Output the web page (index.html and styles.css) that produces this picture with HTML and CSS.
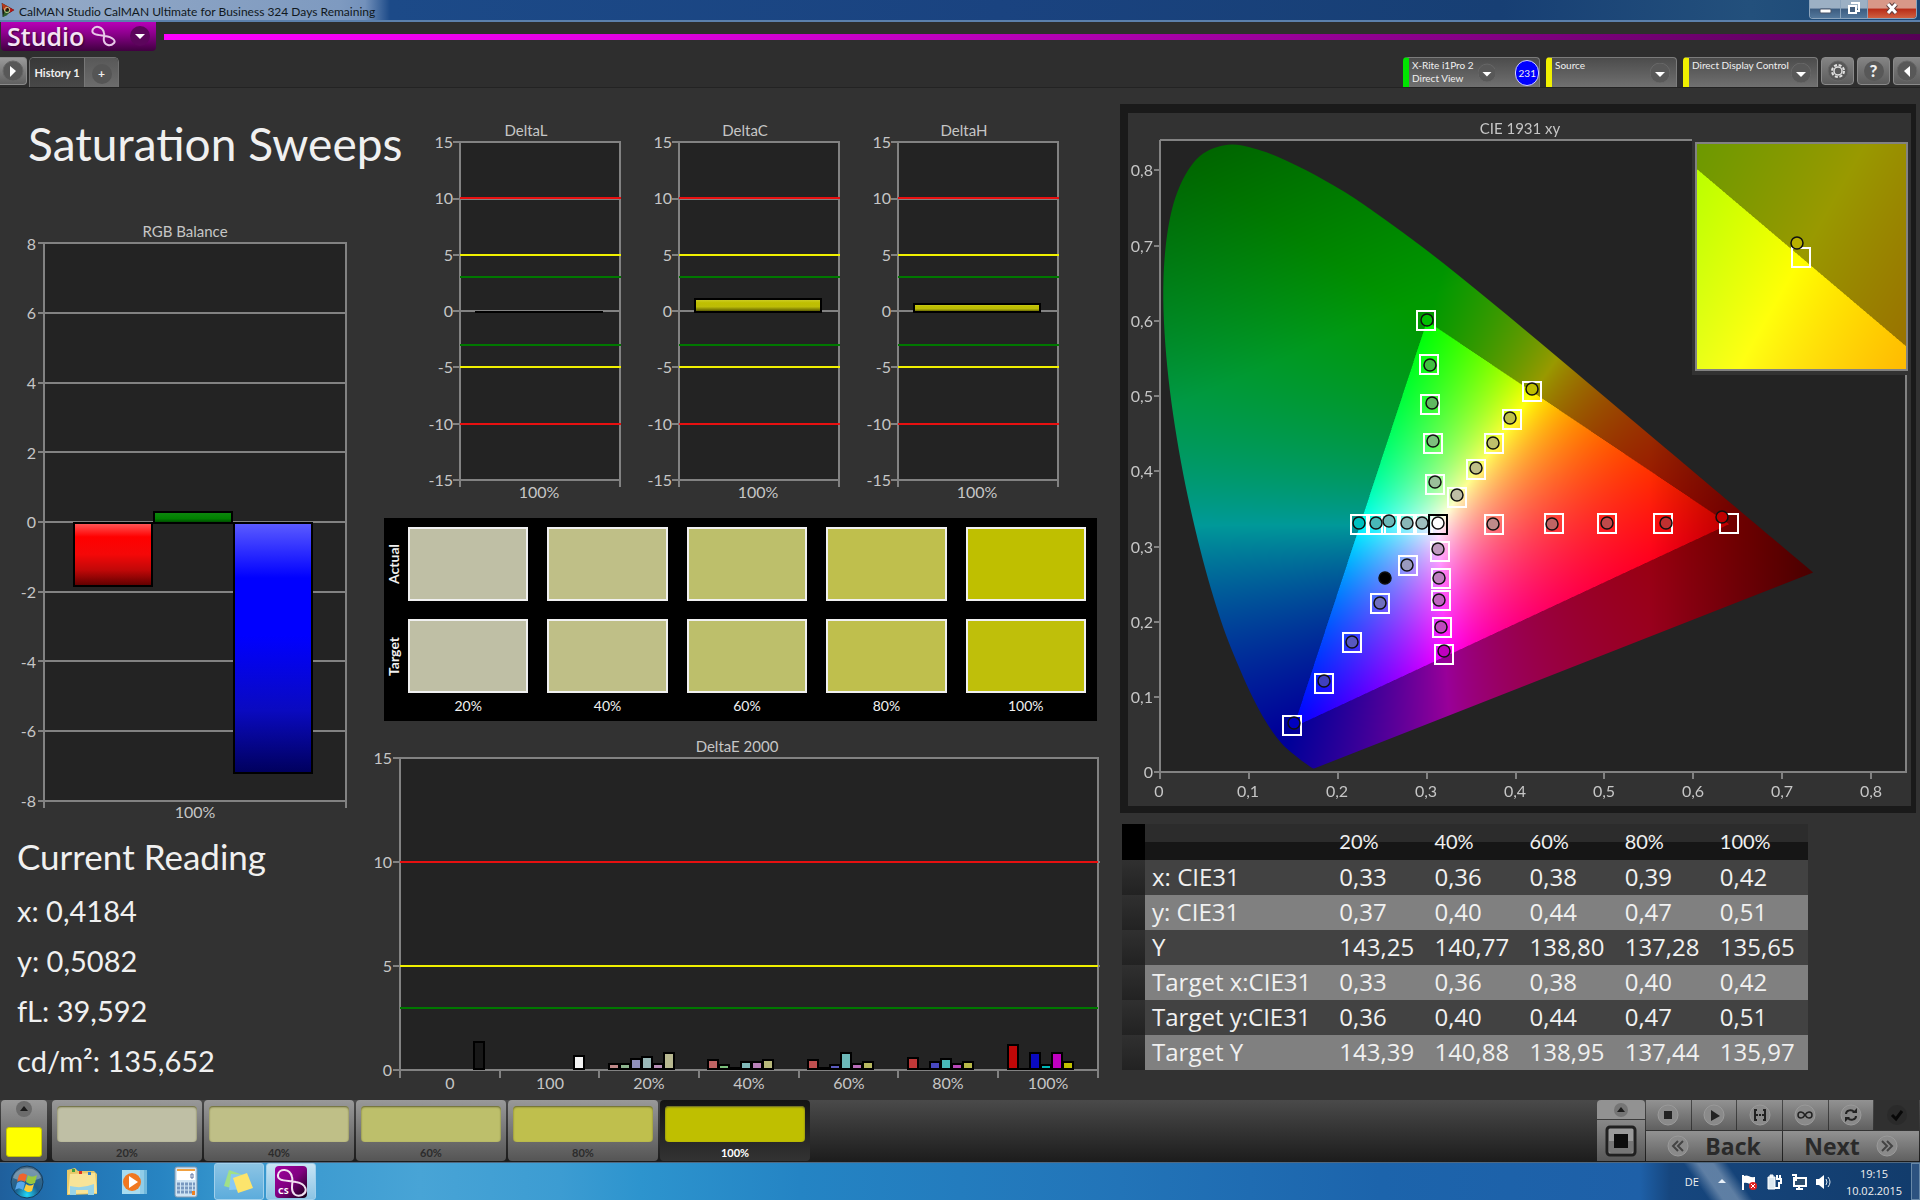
FILE: index.html
```html
<!DOCTYPE html>
<html lang="en">
<head>
<meta charset="utf-8">
<title>CalMAN Studio CalMAN Ultimate for Business 324 Days Remaining</title>
<link rel="stylesheet" href="styles.css">
</head>
<body>
<header class="titlebar">
  <svg class="app-icon" viewBox="0 0 16 18" aria-hidden="true">
    <path d="M1 1l14 8L2 17z" fill="#1c1c10"/><path d="M1 1l7 4-3 5-3-2z" fill="#b53a1c"/><path d="M8 5l7 4-5 3z" fill="#b01818"/><path d="M4 11l6-2-3 6-5 2z" fill="#2c5c2c"/><circle cx="7" cy="9" r="3" fill="none" stroke="#c8d090"/>
  </svg>
  <h1 class="window-title">CalMAN Studio CalMAN Ultimate for Business 324 Days Remaining</h1>
  <div class="window-buttons">
    <button class="win-btn" aria-label="Minimize"><svg viewBox="0 0 30 18" width="30" height="18"><rect x="10" y="9" width="11" height="4" rx="1" fill="#fff" stroke="#4a5468"/></svg></button>
    <button class="win-btn restore" aria-label="Restore"><svg viewBox="0 0 26 18" width="26" height="18"><path d="M10 3h8v8h-2" fill="none" stroke="#fff" stroke-width="2"/><rect x="8" y="6" width="7" height="7" fill="#46607e" stroke="#fff" stroke-width="2"/></svg></button>
    <button class="win-btn close" aria-label="Close"><svg viewBox="0 0 48 18" width="48" height="18"><path d="M20 4l8 9M28 4l-8 9" stroke="#604040" stroke-width="5"/><path d="M20 4l8 9M28 4l-8 9" stroke="#fff" stroke-width="3"/></svg></button>
  </div>
</header>

<div class="brand-row">
  <button class="brand">
    <span>Studio</span>
    <svg viewBox="0 0 26 22" width="26" height="22" aria-hidden="true"><path d="M14 8C13 2 6 0 3 4C0 10 9 10 15 11C23 12 26 16 24 18C20 22 15 20 14 16C13 13 15 11 14 8" fill="none" stroke="#e8c8e8" stroke-width="2"/></svg>
    <svg class="drop" viewBox="0 0 20 20" width="20" height="20" aria-hidden="true"><circle cx="10" cy="10" r="10" fill="#5c055c"/><path d="M5 8h10l-5 5z" fill="#fff"/></svg>
  </button>
  <div class="brand-line"></div>
</div>

<nav class="tab-row">
  <button class="square-btn left" aria-label="Show panel"><svg viewBox="0 0 22 22" width="22" height="22"><circle class="knob" cx="11" cy="11" r="10"/><path d="M8 6v11l6-6z" fill="#fff"/></svg></button>
  <div class="tabs">
    <button class="tab current">History 1</button>
    <button class="tab add" aria-label="Add tab"><span>+</span></button>
  </div>
  <div class="devices">
    <button class="device meter"><span class="device-name">X-Rite i1Pro 2<br>Direct View</span><svg viewBox="0 0 20 20" width="20" height="20"><circle class="knob" cx="10" cy="10" r="10"/><path d="M5 9h10l-5 5z" fill="#fff"/></svg><span class="count">231</span></button>
    <button class="device source"><span class="device-name">Source</span><svg viewBox="0 0 20 20" width="20" height="20"><circle class="knob" cx="10" cy="10" r="10"/><path d="M5 9h10l-5 5z" fill="#fff"/></svg></button>
    <button class="device display"><span class="device-name">Direct Display Control</span><svg viewBox="0 0 20 20" width="20" height="20"><circle class="knob" cx="10" cy="10" r="10"/><path d="M5 9h10l-5 5z" fill="#fff"/></svg></button>
    <button class="square-btn" aria-label="Settings"><svg viewBox="0 0 22 22" width="22" height="22"><circle class="knob" cx="11" cy="11" r="10"/><circle cx="11" cy="11" r="6" fill="none" stroke="#e0e0e0" stroke-width="2" stroke-dasharray="3 1.7"/><circle cx="11" cy="11" r="4" fill="none" stroke="#e0e0e0" stroke-width="1.5"/></svg></button>
    <button class="square-btn" aria-label="Help"><span class="help">?</span></button>
    <button class="square-btn right" aria-label="Hide panel"><svg viewBox="0 0 22 22" width="22" height="22"><circle class="knob" cx="11" cy="11" r="10"/><path d="M14 6v11l-6-6z" fill="#fff"/></svg></button>
  </div>
</nav>

<main class="workspace">
  <section class="col-left">
    <h2 class="page-title">Saturation Sweeps</h2>
    <svg class="chart" viewBox="0 0 370 606" role="img" aria-label="RGB Balance">
      <defs>
        <linearGradient id="red" x1="0" y1="0" x2="0" y2="1"><stop offset="0" stop-color="#ff5a5a"/><stop offset=".22" stop-color="#f00"/><stop offset=".5" stop-color="#f40808"/><stop offset=".75" stop-color="#c00808"/><stop offset="1" stop-color="#5c0000"/></linearGradient>
        <linearGradient id="blue" x1="0" y1="0" x2="0" y2="1"><stop offset="0" stop-color="#5c5cff"/><stop offset=".22" stop-color="#00f"/><stop offset=".45" stop-color="#00f"/><stop offset=".75" stop-color="#0a0ac0"/><stop offset="1" stop-color="#00005c"/></linearGradient>
        <linearGradient id="green" x1="0" y1="0" x2="0" y2="1"><stop offset="0" stop-color="#108810"/><stop offset=".6" stop-color="#008000"/><stop offset="1" stop-color="#004000"/></linearGradient>
        <linearGradient id="yellow" x1="0" y1="0" x2="0" y2="1"><stop offset="0" stop-color="#d0d030"/><stop offset=".3" stop-color="#bfbf00"/><stop offset=".6" stop-color="#bcbc08"/><stop offset="1" stop-color="#484800"/></linearGradient>
      </defs>
      <text class="mid name" x="185" y="17">RGB Balance</text>
      <rect class="plot" x="44" y="23" width="302" height="558"/>
      <path class="grid" d="M38 23h6M38 93h308M38 163h308M38 232h308M38 302h308M38 372h308M38 441h308M38 511h308M38 581h6M44 581v7M346 581v7"/>
      <g class="end"><text x="36" y="30">8</text><text x="36" y="99">6</text><text x="36" y="169">4</text><text x="36" y="239">2</text><text x="36" y="308">0</text><text x="36" y="378">-2</text><text x="36" y="448">-4</text><text x="36" y="517">-6</text><text x="36" y="587">-8</text></g>
      <g stroke="#000" stroke-width="2"><rect x="74" y="303" width="78" height="63" fill="url(#red)"/><rect x="154" y="292" width="78" height="11" fill="url(#green)"/><rect x="234" y="303" width="78" height="250" fill="url(#blue)"/></g>
      <text class="mid" x="195" y="598">100%</text>
    </svg>
    <div class="reading">
      <h3>Current Reading</h3>
      <p>x: 0,4184</p>
      <p>y: 0,5082</p>
      <p>fL: 39,592</p>
      <p>cd/m²: 135,652</p>
    </div>
  </section>

  <section class="col-mid">
    <div class="deltas">
      <svg class="chart" viewBox="0 0 219 400" role="img" aria-label="DeltaL">
        <text class="mid name" x="106" y="26">DeltaL</text>
        <rect class="plot" x="40" y="32" width="160" height="338"/>
        <path class="grid" d="M33 32h7M33 89h167M33 145h167M33 201h167M33 257h167M33 314h167M33 370h7M40 370v7M200 370v7"/>
        <path class="limit-red" d="M40 88h161M40 314h161"/><path class="limit-yellow" d="M40 145h161M40 257h161"/><path class="limit-green" d="M40 167h161M40 235h161"/>
        <path d="M55 202h128" stroke="#000" stroke-width="2"/>
        <g class="end"><text x="33" y="38">15</text><text x="33" y="94">10</text><text x="33" y="151">5</text><text x="33" y="207">0</text><text x="33" y="263">-5</text><text x="33" y="320">-10</text><text x="33" y="376">-15</text></g>
        <text class="mid" x="119" y="388">100%</text>
      </svg>
      <svg class="chart" viewBox="0 0 219 400" role="img" aria-label="DeltaC">
        <text class="mid name" x="106" y="26">DeltaC</text>
        <rect class="plot" x="40" y="32" width="160" height="338"/>
        <path class="grid" d="M33 32h7M33 89h167M33 145h167M33 201h167M33 257h167M33 314h167M33 370h7M40 370v7M200 370v7"/>
        <path class="limit-red" d="M40 88h161M40 314h161"/><path class="limit-yellow" d="M40 145h161M40 257h161"/><path class="limit-green" d="M40 167h161M40 235h161"/>
        <rect x="56" y="189" width="126" height="13" fill="url(#yellow)" stroke="#000" stroke-width="2"/>
        <g class="end"><text x="33" y="38">15</text><text x="33" y="94">10</text><text x="33" y="151">5</text><text x="33" y="207">0</text><text x="33" y="263">-5</text><text x="33" y="320">-10</text><text x="33" y="376">-15</text></g>
        <text class="mid" x="119" y="388">100%</text>
      </svg>
      <svg class="chart" viewBox="0 0 219 400" role="img" aria-label="DeltaH">
        <text class="mid name" x="106" y="26">DeltaH</text>
        <rect class="plot" x="40" y="32" width="160" height="338"/>
        <path class="grid" d="M33 32h7M33 89h167M33 145h167M33 201h167M33 257h167M33 314h167M33 370h7M40 370v7M200 370v7"/>
        <path class="limit-red" d="M40 88h161M40 314h161"/><path class="limit-yellow" d="M40 145h161M40 257h161"/><path class="limit-green" d="M40 167h161M40 235h161"/>
        <rect x="56" y="194" width="126" height="8" fill="url(#yellow)" stroke="#000" stroke-width="2"/>
        <g class="end"><text x="33" y="38">15</text><text x="33" y="94">10</text><text x="33" y="151">5</text><text x="33" y="207">0</text><text x="33" y="263">-5</text><text x="33" y="320">-10</text><text x="33" y="376">-15</text></g>
        <text class="mid" x="119" y="388">100%</text>
      </svg>
    </div>

    <div class="compare">
      <span class="side">Actual</span><i class="chip y20"></i><i class="chip y40"></i><i class="chip y60"></i><i class="chip y80"></i><i class="chip y100"></i>
      <span class="side">Target</span><i class="chip y20"></i><i class="chip y40"></i><i class="chip y60"></i><i class="chip y80"></i><i class="chip t100"></i>
      <span></span><span class="pct">20%</span><span class="pct">40%</span><span class="pct">60%</span><span class="pct">80%</span><span class="pct">100%</span>
    </div>

    <svg class="chart" viewBox="0 0 740 370" role="img" aria-label="DeltaE 2000">
      <text class="mid name" x="367" y="22">DeltaE 2000</text>
      <rect class="plot" x="30" y="28" width="698" height="312"/>
      <path class="grid" d="M23 28h7M23 132h707M23 236h707M23 340h7M30 340v8M130 340v8M229 340v8M329 340v8M429 340v8M528 340v8M628 340v8M728 340v8"/>
      <path class="limit-red" d="M30 132h698"/><path class="limit-yellow" d="M30 236h698"/><path class="limit-green" d="M30 278h698"/>
      <g class="end"><text x="22" y="34">15</text><text x="22" y="138">10</text><text x="22" y="242">5</text><text x="22" y="346">0</text></g>
      <g class="bars">
        <path fill="#181818" d="M104 312h10v27h-10z"/><path fill="#f4f4f4" d="M204 326h10v13h-10z"/>
        <path fill="#c08a8a" d="M239 334h10v5h-10z"/><path fill="#8fb58f" d="M250 334h10v5h-10z"/><path fill="#9090bc" d="M261 329h10v10h-10z"/><path fill="#9ab8b8" d="M272 327h10v12h-10z"/><path fill="#b890b8" d="M283 334h10v5h-10z"/><path fill="#b8b890" d="M294 323h10v16h-10z"/>
        <path fill="#c06464" d="M338 330h10v9h-10z"/><path fill="#7dc07d" d="M349 335h10v4h-10z"/><path fill="#000" d="M360 338h10v1h-10z"/><path fill="#80b8b8" d="M371 332h10v7h-10z"/><path fill="#b880b8" d="M382 332h10v7h-10z"/><path fill="#b8b87a" d="M393 330h10v9h-10z"/>
        <path fill="#c05050" d="M438 330h10v9h-10z"/><path fill="#000" d="M449 338h10v1h-10z"/><path fill="#5c5cc0" d="M460 335h10v4h-10z"/><path fill="#6cb8b8" d="M471 323h10v16h-10z"/><path fill="#b86cb8" d="M482 334h10v5h-10z"/><path fill="#b8b860" d="M493 332h10v7h-10z"/>
        <path fill="#c03838" d="M538 328h10v11h-10z"/><path fill="#000" d="M549 339h10v0h-10z"/><path fill="#4848c0" d="M560 332h10v7h-10z"/><path fill="#48b8b8" d="M571 329h10v10h-10z"/><path fill="#b848b8" d="M582 334h10v5h-10z"/><path fill="#b8b848" d="M593 332h10v7h-10z"/>
        <path fill="#c00808" d="M638 315h10v24h-10z"/><path fill="#000" d="M649 339h10v0h-10z"/><path fill="#0a0ac0" d="M660 323h10v16h-10z"/><path fill="#00b8b8" d="M671 335h10v4h-10z"/><path fill="#c000c0" d="M682 323h10v16h-10z"/><path fill="#c0c000" d="M693 332h10v7h-10z"/>
      </g>
      <g class="mid"><text x="80" y="359">0</text><text x="180" y="359">100</text><text x="279" y="359">20%</text><text x="379" y="359">40%</text><text x="479" y="359">60%</text><text x="578" y="359">80%</text><text x="678" y="359">100%</text></g>
    </svg>
  </section>

  <section class="col-right">
    <div class="cie">
      <canvas id="cie" width="1566" height="1386"></canvas>
      <svg class="chart" viewBox="0 0 783 693" role="img" aria-label="CIE 1931 xy">
        <defs><rect id="t" x="-9" y="-9" width="18" height="19" fill="none" stroke-width="2"/></defs>
        <text class="mid name" x="392" y="21">CIE 1931 xy</text>
        <path class="grid" d="M32 27H564M32 27V659H778V262M26 57h6M26 133h6M26 208h6M26 283h6M26 358h6M26 434h6M26 509h6M26 584h6M26 659h6M32 659v7M121 659v7M210 659v7M299 659v7M388 659v7M476 659v7M565 659v7M654 659v7M743 659v7"/>
        <rect class="grid" x="568" y="30" width="211" height="227"/>
        <g class="end"><text x="25" y="63">0,8</text><text x="25" y="139">0,7</text><text x="25" y="214">0,6</text><text x="25" y="289">0,5</text><text x="25" y="364">0,4</text><text x="25" y="440">0,3</text><text x="25" y="515">0,2</text><text x="25" y="590">0,1</text><text x="25" y="665">0</text></g>
        <g class="mid"><text x="31" y="684">0</text><text x="120" y="684">0,1</text><text x="209" y="684">0,2</text><text x="298" y="684">0,3</text><text x="387" y="684">0,4</text><text x="476" y="684">0,5</text><text x="565" y="684">0,6</text><text x="654" y="684">0,7</text><text x="743" y="684">0,8</text></g>
        <g stroke="#fff">
          <use href="#t" x="298" y="207"/><use href="#t" x="301" y="251"/><use href="#t" x="302" y="291"/><use href="#t" x="305" y="330"/><use href="#t" x="307" y="371"/>
          <use href="#t" x="404" y="278"/><use href="#t" x="384" y="306"/><use href="#t" x="366" y="330"/><use href="#t" x="348" y="356"/><use href="#t" x="329" y="384"/>
          <use href="#t" x="366" y="411"/><use href="#t" x="426" y="410"/><use href="#t" x="479" y="410"/><use href="#t" x="535" y="410"/><use href="#t" x="601" y="410"/>
          <use href="#t" x="232" y="411"/><use href="#t" x="248" y="411"/><use href="#t" x="263" y="411"/><use href="#t" x="279" y="411"/><use href="#t" x="295" y="411"/>
          <use href="#t" x="312" y="438"/><use href="#t" x="313" y="465"/><use href="#t" x="313" y="487"/><use href="#t" x="314" y="514"/><use href="#t" x="316" y="541"/>
          <use href="#t" x="280" y="452"/><use href="#t" x="252" y="490"/><use href="#t" x="224" y="529"/><use href="#t" x="196" y="570"/><use href="#t" x="164" y="612"/>
          <use href="#t" x="673" y="144"/>
        </g>
        <use href="#t" x="310" y="411" stroke="#000"/>
        <g stroke="#101010" stroke-width="1.5">
          <circle cx="299" cy="207" r="6" fill="#00bf00"/><circle cx="302" cy="252" r="6" fill="#40bf40"/><circle cx="304" cy="290" r="6" fill="#60b860"/><circle cx="305" cy="328" r="6" fill="#7dbf7d"/><circle cx="307" cy="369" r="6" fill="#9abf9a"/>
          <circle cx="404" cy="276" r="6" fill="#bfbf00"/><circle cx="382" cy="305" r="6" fill="#bfbf48"/><circle cx="365" cy="330" r="6" fill="#bfbf6b"/><circle cx="348" cy="355" r="6" fill="#bfbf87"/><circle cx="329" cy="382" r="6" fill="#bfbfa5"/>
          <circle cx="365" cy="411" r="6" fill="#bf8a8a"/><circle cx="424" cy="411" r="6" fill="#bf6464"/><circle cx="479" cy="410" r="6" fill="#bf4a4a"/><circle cx="538" cy="410" r="6" fill="#bf3030"/><circle cx="594" cy="404" r="6" fill="#bf0000"/>
          <circle cx="231" cy="410" r="6" fill="#00bfbf"/><circle cx="248" cy="410" r="6" fill="#48b8b8"/><circle cx="261" cy="408" r="6" fill="#6cb8b8"/><circle cx="279" cy="410" r="6" fill="#8ab8b8"/><circle cx="294" cy="410" r="6" fill="#a0bfbf"/>
          <circle cx="310" cy="410" r="6" fill="#fff"/>
          <circle cx="310" cy="436" r="6" fill="#bf9abf"/><circle cx="311" cy="465" r="6" fill="#bf7dbf"/><circle cx="311" cy="487" r="6" fill="#bf64bf"/><circle cx="313" cy="514" r="6" fill="#bf48bf"/><circle cx="316" cy="538" r="6" fill="#bf00bf"/>
          <circle cx="279" cy="452" r="6" fill="#9a9abf"/><circle cx="252" cy="490" r="6" fill="#7070bf"/><circle cx="224" cy="529" r="6" fill="#5858bf"/><circle cx="196" cy="568" r="6" fill="#4040bf"/><circle cx="166" cy="610" r="6" fill="#0000bf"/>
          <circle cx="257" cy="465" r="6" fill="#000"/><circle cx="669" cy="130" r="6" fill="#b8b000"/>
        </g>
      </svg>
    </div>
    <table class="readings">
      <thead><tr><th class="mark"></th><th></th><th>20%</th><th>40%</th><th>60%</th><th>80%</th><th>100%</th></tr></thead>
      <tbody>
        <tr><td class="mark"></td><th>x: CIE31</th><td>0,33</td><td>0,36</td><td>0,38</td><td>0,39</td><td>0,42</td></tr>
        <tr><td class="mark"></td><th>y: CIE31</th><td>0,37</td><td>0,40</td><td>0,44</td><td>0,47</td><td>0,51</td></tr>
        <tr><td class="mark"></td><th>Y</th><td>143,25</td><td>140,77</td><td>138,80</td><td>137,28</td><td>135,65</td></tr>
        <tr><td class="mark"></td><th>Target x:CIE31</th><td>0,33</td><td>0,36</td><td>0,38</td><td>0,40</td><td>0,42</td></tr>
        <tr><td class="mark"></td><th>Target y:CIE31</th><td>0,36</td><td>0,40</td><td>0,44</td><td>0,47</td><td>0,51</td></tr>
        <tr><td class="mark"></td><th>Target Y</th><td>143,39</td><td>140,88</td><td>138,95</td><td>137,44</td><td>135,97</td></tr>
      </tbody>
    </table>
  </section>
</main>

<footer class="player">
  <button class="pattern-source" aria-label="Pattern window"><svg viewBox="0 0 16 16" width="16" height="16"><circle cx="8" cy="8" r="8" fill="#6c6c6c"/><path d="M4 10h8L8 5z" fill="#1c1c1c"/></svg><i class="current-color"></i></button>
  <div class="patterns">
    <button class="pattern"><i class="y20"></i>20%</button>
    <button class="pattern"><i class="y40"></i>40%</button>
    <button class="pattern"><i class="y60"></i>60%</button>
    <button class="pattern"><i class="y80"></i>80%</button>
    <button class="pattern active"><i class="y100"></i>100%</button>
  </div>
  <div class="controls">
    <div class="stack">
      <button class="ctl up" aria-label="Expand"><svg viewBox="0 0 16 16" width="16" height="16"><circle cx="8" cy="8" r="7" fill="#757575"/><path d="M4 10h8L8 5z" fill="#1c1c1c"/></svg></button>
      <button class="ctl pick" aria-label="Pattern size"><svg viewBox="0 0 32 32" width="32" height="32"><rect x="2" y="2" width="28" height="28" rx="3" fill="#9a9a9a" stroke="#202020" stroke-width="3"/><path d="M4 16h24v10a2 2 0 0 1-2 2H6a2 2 0 0 1-2-2z" fill="#767676"/><rect x="9" y="9" width="14" height="14" fill="#0c0c0c"/></svg></button>
    </div>
    <div class="transport">
      <button class="ctl" aria-label="Stop"><svg viewBox="0 0 22 22" width="22" height="22"><circle class="disc" cx="11" cy="11" r="10"/><rect x="7" y="7" width="8" height="8" fill="#222"/></svg></button>
      <button class="ctl" aria-label="Play"><svg viewBox="0 0 22 22" width="22" height="22"><circle class="disc" cx="11" cy="11" r="10"/><path d="M8 6v11l9-5z" fill="#222"/></svg></button>
      <button class="ctl" aria-label="Read series"><svg viewBox="0 0 22 22" width="22" height="22"><circle class="disc" cx="11" cy="11" r="10"/><path d="M8 6H6v10h2M14 6h2v10h-2" fill="none" stroke="#222" stroke-width="2"/><path d="M7 11h8" stroke="#222" stroke-width="2" stroke-dasharray="2 1"/></svg></button>
      <button class="ctl" aria-label="Read continuously"><svg viewBox="0 0 22 22" width="22" height="22"><circle class="disc" cx="11" cy="11" r="10"/><path d="M11 11C9 8 8 8 7 8a3 3 0 0 0 0 6c1 0 2 0 4-3s3-3 4-3a3 3 0 0 1 0 6c-1 0-2 0-4-3z" fill="none" stroke="#222" stroke-width="1.5"/></svg></button>
      <button class="ctl" aria-label="Refresh"><svg viewBox="0 0 22 22" width="22" height="22"><circle class="disc" cx="11" cy="11" r="10"/><path d="M6 10c0-4 6-5 8-2M16 12c0 4-6 5-8 2" fill="none" stroke="#222" stroke-width="2"/><path d="M12 9h5V4zM10 13H5v5z" fill="#222"/></svg></button>
      <button class="ctl dim" aria-label="Accept"><svg viewBox="0 0 22 22" width="22" height="22"><circle cx="11" cy="11" r="10" fill="#2a2a2a"/><path d="M6 11l4 4 6-8" fill="none" stroke="#080808" stroke-width="3"/></svg></button>
      <button class="ctl wide"><svg viewBox="0 0 22 22" width="22" height="22"><circle class="disc" cx="11" cy="11" r="10"/><path d="M11 6l-5 5 5 5M16 6l-5 5 5 5" fill="none" stroke="#444" stroke-width="2"/></svg>Back</button>
      <button class="ctl wide">Next<svg viewBox="0 0 22 22" width="22" height="22"><circle class="disc" cx="11" cy="11" r="10"/><path d="M6 6l5 5-5 5M11 6l5 5-5 5" fill="none" stroke="#444" stroke-width="2"/></svg></button>
    </div>
  </div>
</footer>

<div class="taskbar">
  <div class="launchers">
    <button class="task start" aria-label="Start"><svg viewBox="0 0 36 36" width="36" height="36"><defs><radialGradient id="orb" cx=".5" cy=".9" r=".9"><stop offset="0" stop-color="#20d8f8"/><stop offset=".4" stop-color="#1a6090"/><stop offset="1" stop-color="#4a6a84"/></radialGradient></defs><circle cx="18" cy="18" r="16" fill="url(#orb)" stroke="#163c5c"/><path d="M4 14C7 1 29 1 32 14C24 18 12 18 4 14z" fill="#fff" opacity=".3"/><path d="M10 11c3-2 5-2 8 0l-2 7c-3-2-5-2-8 0z" fill="#f0642c"/><path d="M19 11c3 2 5 2 9 0l-2 8c-4 2-6 1-9-1z" fill="#98c840"/><path d="M8 19c3-2 5-2 8 0l-2 7c-3-2-5-2-8 0z" fill="#58a8ec"/><path d="M17 20c3 2 5 2 8 0l-2 7c-3 2-5 1-8-1z" fill="#fccc3c"/></svg></button>
    <button class="task" aria-label="Explorer"><svg viewBox="0 0 34 32" width="34" height="32"><path d="M2 4l8-2 3 3h16l3 3v20l-30 1z" fill="#e8c868"/><path d="M5 8l25-1 2 20-29 1z" fill="#f8e498"/><path d="M7 3h3v3H7z" fill="#40a040"/><path d="M14 5h3v3h-3z" fill="#e03020"/><path d="M23 6h3v3h-3z" fill="#3080d0"/><path d="M5 20q12 3 24-2v11H23v-5H11v5H5z" fill="#98d4e8"/></svg></button>
    <button class="task" aria-label="Media Player"><svg viewBox="0 0 34 32" width="34" height="32"><rect x="12" y="4" width="18" height="24" fill="#70b8dc"/><rect x="9" y="4" width="18" height="24" fill="#90cce8"/><rect x="5" y="4" width="18" height="24" fill="#a8dcf0"/><circle cx="15" cy="16" r="9" fill="#f07820"/><path d="M12 10v12l9-6z" fill="#fff"/></svg></button>
    <button class="task" aria-label="Calculator"><svg viewBox="0 0 34 32" width="34" height="32"><rect x="6" y="1" width="22" height="30" rx="2" fill="#cfe4f4" stroke="#8098b0"/><rect x="8" y="3" width="18" height="11" fill="#fff"/><path d="M8 4h18" stroke="#f0a040" stroke-width="2"/><path d="M22 8h2v4h-2z" fill="none" stroke="#5870a0"/><path d="M8 18h18M8 22h18M8 26h18" stroke="#7898c0" stroke-width="3" stroke-dasharray="3 1"/><path d="M23 25h3v4h-3z" fill="#f08020"/></svg></button>
    <button class="task open" aria-label="Sticky Notes"><svg viewBox="0 0 34 32" width="34" height="32"><path d="M7 4l14 5-5 15L2 20z" fill="#a0e088"/><path d="M9 8l15 1-1 14-16 1z" fill="#88c8f4"/><path d="M11 12l14-5 6 15-15 5z" fill="#fce46c"/></svg></button>
    <button class="task open active" aria-label="CalMAN Studio"><svg viewBox="0 0 34 34" width="34" height="34"><defs><linearGradient id="cs" x1="0" y1="0" x2="1" y2="1"><stop offset="0" stop-color="#a000a0"/><stop offset=".5" stop-color="#800080"/><stop offset="1" stop-color="#100010"/></linearGradient></defs><rect x="1" y="1" width="32" height="32" rx="4" fill="url(#cs)"/><path d="M18 12C16 3 5 3 4 10C3 17 14 15 22 17C33 19 34 27 28 30C22 32 18 29 18 23C18 18 19 16 18 12" fill="none" stroke="#f0e0f0" stroke-width="2"/><text x="4" y="29" class="cs">CS</text></svg></button>
  </div>
  <div class="tray">
    <span class="lang">DE</span>
    <svg class="more" viewBox="0 0 8 5" width="8" height="5" aria-hidden="true"><path d="M0 4h8L4 0z" fill="#e8f0f8"/></svg>
    <svg viewBox="0 0 16 16" width="16" height="16" aria-hidden="true"><path d="M2 1v15" stroke="#fff" stroke-width="2"/><path d="M3 2c4-2 5 2 11 1v7c-6 1-7-2-11-1z" fill="#fff"/><circle cx="12" cy="12" r="4" fill="#e02020"/><path d="M10 10l4 4M14 10l-4 4" stroke="#fff"/></svg>
    <svg viewBox="0 0 16 16" width="16" height="16" aria-hidden="true"><path d="M2 3h7v12H2zM4 1h3v2H4z" fill="#dce8f0" stroke="#fff"/><path d="M11 1v4M14 1v4M10 5h5v4h-2v5H9" fill="none" stroke="#fff" stroke-width="2"/></svg>
    <svg viewBox="0 0 16 16" width="16" height="16" aria-hidden="true"><rect x="3" y="4" width="12" height="8" fill="#2c4c6c" stroke="#fff" stroke-width="2"/><path d="M8 12v3M5 15h7M1 1h4v5H3" fill="none" stroke="#fff" stroke-width="2"/></svg>
    <svg viewBox="0 0 16 16" width="16" height="16" aria-hidden="true"><path d="M0 5h3l5-4v14l-5-4H0z" fill="#fff"/><path d="M10 5q2 3 0 6M12 3q4 5 0 10" fill="none" stroke="#dce8f0"/></svg>
    <div class="clock"><span>19:15</span><span>10.02.2015</span></div>
    <button class="show-desktop" aria-label="Show desktop"></button>
  </div>
</div>
<script src="cie.js"></script>
</body>
</html>
```
FILE: styles.css
```css
* { box-sizing: border-box; }
body {
  margin: 0;
  min-height: 100vh;
  display: flex;
  flex-direction: column;
  background: #2e2e2e;
  color: #f0f0f0;
  font-family: Lato, "Open Sans", sans-serif;
  overflow-x: hidden;
}
button { margin: 0; padding: 0; border: 0; background: none; color: inherit; font: inherit; }
svg, canvas { display: block; }
h1, h2, h3, p { margin: 0; font-weight: 400; }

.titlebar {
  height: 22px;
  display: flex;
  align-items: center;
  border-bottom: 2px solid #5c80ac;
  background: linear-gradient(90deg, #7f9cc0 0, #92a8c6 60px, #7e9ac0 340px, #7391bb 365px, #1c4a88 390px, #1a4380 1000px, #173f74 1500px, #23507c 1750px, #1a4674 100%);
}
.app-icon { width: 16px; height: 16px; }
.window-title {
  flex: 1;
  padding: 4px 0 0 3px;
  font-size: 12px;
  line-height: 16px;
  color: #101820;
}
.window-buttons { display: flex; align-self: flex-start; margin-right: 3px; border: 1px solid #8ca4bc; border-top: 0; border-radius: 0 0 4px 4px; overflow: hidden; }
.win-btn { height: 18px; background: linear-gradient(#9cb0c4 0 45%, #3c5c80 50%, #54789c); border-right: 1px solid #8ca4bc; }
.win-btn.close { border-right: 0; background: linear-gradient(#d89888 0 45%, #b82c18 50%, #d06040); }

.brand-row { display: flex; height: 35px; padding-left: 1px; gap: 8px; }
.brand {
  width: 155px;
  height: 29px;
  display: flex;
  align-items: center;
  gap: 6px;
  padding: 0 6px 2px;
  border-radius: 0 0 4px 4px;
  background: linear-gradient(#b800b8, #8c008c 40%, #400040);
  font: 600 25px/26px "Open Sans", sans-serif;
  color: #f4e4f4;
  text-shadow: 1px 1px 2px #300030;
}
.brand .drop { margin-left: auto; }
.brand-line { flex: 1; height: 6px; margin-top: 12px; background: linear-gradient(90deg, #f0f, #e400e4 25%, #8a008a 72%, #560056); }

.tab-row { display: flex; height: 31px; gap: 2px; border-bottom: 1px solid #232323; }
.knob { fill: #585858; stroke: #686868; }
.square-btn {
  width: 33px;
  height: 28px;
  display: grid;
  place-items: center;
  border: 1px solid #8a8a8a;
  border-radius: 4px;
  background: linear-gradient(#848484, #5c5c5c);
}
.square-btn.left { width: 27px; border-left: 0; border-radius: 0 4px 4px 0; background: linear-gradient(#9a9a9a, #606060); }
.square-btn.right { width: 27px; border-right: 0; border-radius: 4px 0 0 4px; }
.help { width: 20px; border-radius: 10px; background: #585858; font-size: 17px; line-height: 20px; font-weight: 900; }
.tabs { display: flex; height: 30px; border: 1px solid #707070; border-bottom: 0; border-radius: 5px 5px 0 0; overflow: hidden; }
.tab { width: 54px; font-size: 11px; font-weight: 700; background: linear-gradient(#383838, #484848); }
.tab.add { width: 34px; padding-top: 3px; border-left: 1px solid #777; background: linear-gradient(#585858, #6c6c6c); }
.tab.add span { display: block; width: 20px; margin: 0 auto; border-radius: 10px; background: #555; font-size: 12px; line-height: 20px; }
.devices { margin-left: auto; display: flex; gap: 3px; }
.device {
  height: 30px;
  display: flex;
  align-items: center;
  padding: 0 6px 0 3px;
  border: 1px solid #7c7c7c;
  border-bottom: 0;
  border-left: 6px solid #f0f000;
  border-radius: 4px 4px 0 0;
  background: linear-gradient(#4c4c4c, #707070);
  text-align: left;
  font-size: 10px;
  line-height: 13px;
}
.device-name { flex: 1; align-self: flex-start; padding-top: 1px; white-space: nowrap; }
.device.meter { width: 137px; margin-right: 3px; padding-right: 0; border-left-color: #00e400; }
.device.source { width: 131px; margin-right: 3px; }
.device.display { width: 135px; }
.count { width: 26px; height: 26px; margin-left: 20px; border: 1px solid #d0d0ff; border-radius: 13px; background: #00f; text-align: center; line-height: 24px; }
.device.meter svg { margin-left: 4px; }

.workspace {
  flex: 1;
  display: grid;
  grid-template-columns: 370fr 740fr 810fr;
  align-items: start;
  background: #323232;
}
.workspace > section { min-width: 0; }
.chart { width: 100%; height: auto; overflow: visible; font-size: 16px; fill: #c6c6c6; }
.chart .mid { text-anchor: middle; }
.chart .end { text-anchor: end; }
.chart .name { font-size: 15px; }
.plot { fill: #232323; stroke: #828282; stroke-width: 2; }
.grid { fill: none; stroke: #828282; stroke-width: 2; }
.limit-red { stroke: #e81010; stroke-width: 2; }
.limit-yellow { stroke: #f0f000; stroke-width: 2; }
.limit-green { stroke: #007800; stroke-width: 2; }
.bars path { stroke: #000; stroke-width: 2; }

.page-title { padding: 26px 0 0 28px; height: 132px; font-size: 46px; line-height: 60px; white-space: nowrap; }
.reading { padding: 0 0 8px 17px; font-size: 29px; line-height: 50px; }
.reading h3 { font-size: 35px; line-height: 60px; }

.deltas { display: grid; grid-template-columns: repeat(3, 1fr); padding: 22px 33px 0 50px; }
.compare {
  display: grid;
  grid-template-columns: 3px repeat(5, 1fr);
  column-gap: 19px;
  align-items: center;
  margin: 8px 13px 9px 14px;
  padding: 9px 11px 5px 2px;
  background: #000;
}
.chip { height: 74px; margin-bottom: 18px; border: 2px solid #f0f0f0; }
.side { margin-bottom: 18px; writing-mode: vertical-rl; transform: rotate(180deg); justify-self: start; font-size: 14px; line-height: 16px; font-weight: 700; }
.pct { margin-top: -15px; text-align: center; font-size: 14px; line-height: 20px; }
.y20 { background: #bfbfa5; }
.y40 { background: #bfbf87; }
.y60 { background: #bdbf6b; }
.y80 { background: #bfbf4d; }
.y100 { background: #bfbf00; }
.t100 { background: #bfbf0a; }

.col-right { padding: 16px 4px 8px 10px; }
.cie { display: grid; border: solid #1a1a1a; border-width: 9px 5px 7px 8px; }
.cie > * { grid-area: 1 / 1; width: 100%; }
.cie canvas { height: auto; }

.readings { width: 686px; margin: 11px 0 0 2px; border-collapse: collapse; table-layout: fixed; font: 24px/34px "Open Sans", sans-serif; text-align: left; }
.readings th, .readings td { padding: 0 0 1px 7px; font-weight: 400; white-space: nowrap; }
.readings thead th { width: 95px; height: 36px; font: 20px/35px Lato, sans-serif; background: linear-gradient(#2c2c2c 50%, #161616 50%); }
.readings thead th:nth-child(2) { width: 187px; }
.readings thead .mark { width: 23px; background: #000; }
.readings tbody tr { height: 35px; background: #424242; }
.readings tbody tr:nth-child(even) { background: #808080; }
.readings tbody .mark { background: linear-gradient(#303030, #222); }

.player { display: flex; gap: 5px; height: 62px; padding: 0 1px; background: linear-gradient(#4a4a4a, #1c1c1c); }
.pattern-source, .pattern { border-radius: 4px; background: linear-gradient(#999, #555); height: 61px; }
.pattern-source { width: 46px; display: flex; flex-direction: column; align-items: center; gap: 10px; padding-top: 1px; }
.current-color { width: 36px; height: 30px; border-radius: 3px; border: 1px solid #c8c800; background: #ff0; }
.patterns { display: flex; gap: 2px; flex: 1; }
.pattern { width: 150px; padding: 6px 5px 0; color: #2c2c2c; font-size: 11px; line-height: 20px; font-weight: 700; }
.pattern i { display: block; height: 36px; margin-bottom: 1px; border-radius: 4px; box-shadow: inset 0 1px 2px #606030; }
.pattern.active { background: linear-gradient(#141414, #333); color: #fff; }
.controls { display: flex; gap: 1px; height: 61px; }
.stack { width: 48px; display: flex; flex-direction: column; gap: 1px; }
.ctl { display: flex; align-items: center; justify-content: center; background: linear-gradient(#929292, #606060); }
.up { height: 19px; border-radius: 4px 4px 0 0; background: #929292; }
.pick { flex: 1; background: linear-gradient(#888, #585858); }
.transport { width: 273px; display: grid; grid-template-columns: repeat(6, 1fr); grid-template-rows: 30px 30px; gap: 1px; }
.disc { fill: #8a8a8a; stroke: #9a9a9a; }
.ctl.dim { background: #303030; }
.ctl.wide { grid-column: span 3; gap: 16px; font: 700 23px/30px "Open Sans", sans-serif; color: #2a2a2a; }

.taskbar {
  height: 38px;
  display: flex;
  justify-content: space-between;
  border-top: 1px solid #506880;
  background:
    linear-gradient(55deg, transparent 1400px, #ffffff50 1412px, #ffffff50 1424px, transparent 1436px) no-repeat,
    linear-gradient(90deg, #1f5f9c 0, #2172b2 60px, #2784c2 160px, #3494cc 220px, #48a4d6 420px, #3c9cd2 560px, #2d94ce 640px, #2484c4 800px, #2274b8 1120px, #1c64ac 1380px, #1e60a8 1640px, #16467e 1670px, #123c6c 1910px);
}
.launchers { display: flex; }
.task { width: 52px; display: grid; place-items: center; }
.task.start { width: 56px; }
.task.start svg { margin-right: 2px; }
.task.open { width: 50px; margin-left: 2px; border: 1px solid #a0d0ec; border-radius: 3px; background: linear-gradient(#8cc4e4, #5cacdc); }
.task.active { background: linear-gradient(#c8e4f4, #8cc4e4); }
.cs { font: 700 9px "Open Sans", sans-serif; fill: #fff; }
.tray { display: flex; align-items: center; gap: 9px; }
.tray .more { margin-right: 6px; }
.lang { margin-right: 10px; font: 11px/20px "Open Sans", sans-serif; }
.clock { display: flex; flex-direction: column; margin-left: 5px; font: 11px/17px "Open Sans", sans-serif; text-align: center; }
.show-desktop { width: 9px; height: 37px; border: 1px solid #6888a8; background: #2c5280; }
```
FILE: cie.js
```js
// Paints the chromaticity diagram and the magnified inset behind the markers.
const canvas = document.getElementById('cie');
const ctx = canvas.getContext('2d');
const SCALE = 2;
const RED = [0.64, 0.33], GREEN = [0.3, 0.6], BLUE = [0.15, 0.06];

const locus = [
  [.1741, .0050], [.1714, .0051], [.1644, .0109], [.1566, .0177], [.1440, .0297],
  [.1355, .0399], [.1241, .0578], [.1096, .0868], [.0913, .1327], [.0687, .2007],
  [.0454, .2950], [.0235, .4127], [.0082, .5384], [.0039, .6548], [.0139, .7502],
  [.0389, .8120], [.0743, .8338], [.1142, .8262], [.1547, .8059], [.1929, .7816],
  [.2296, .7543], [.3016, .6923], [.3731, .6245], [.4441, .5547], [.5125, .4866],
  [.5752, .4242], [.6270, .3725], [.6915, .3083], [.7347, .2653]
];

function side(a, b, x, y) {
  return (b[0] - a[0]) * (y - a[1]) - (b[1] - a[1]) * (x - a[0]);
}

function colourAt(x, y) {
  const X = x / y, Z = (1 - x - y) / y;
  const r = Math.max(0, 3.2406 * X - 1.5372 - 0.4986 * Z);
  const g = Math.max(0, -0.9689 * X + 1.8758 + 0.0415 * Z);
  const b = Math.max(0, 0.0557 * X - 0.2040 + 1.0570 * Z);
  const inside = side(RED, GREEN, x, y) >= 0 && side(GREEN, BLUE, x, y) >= 0 && side(BLUE, RED, x, y) >= 0;
  let level = inside ? 255 : 153;
  level *= 1 - Math.max(0, Math.min(0.5, (x - 0.55) * 2.8));
  level *= 1 - Math.max(0, (y - 0.6 + (0.3 - x) * 0.5 - 0.03) * 1.05);
  const k = level / Math.max(r, g, b);
  return [r * k, g * k, b * k];
}

// Fills a w by h area with colours; toX and toY map its pixels to x and y.
function paint(w, h, toX, toY) {
  const layer = document.createElement('canvas');
  layer.width = w;
  layer.height = h;
  const c = layer.getContext('2d');
  const image = c.createImageData(w, h);
  let i = 0;
  for (let row = 0; row < h; row++) {
    const y = Math.max(0.001, toY(row / SCALE));
    for (let col = 0; col < w; col++) {
      const rgb = colourAt(toX(col / SCALE), y);
      image.data[i++] = rgb[0];
      image.data[i++] = rgb[1];
      image.data[i++] = rgb[2];
      image.data[i++] = 255;
    }
  }
  c.putImageData(image, 0, 0);
  return layer;
}

const px = p => [(32 + p[0] * 889) * SCALE, (659 - p[1] * 752) * SCALE];

ctx.fillStyle = '#323232';
ctx.fillRect(0, 0, canvas.width, canvas.height);
ctx.fillStyle = '#232323';
ctx.fillRect(32 * SCALE, 27 * SCALE, 746 * SCALE, 632 * SCALE);

ctx.save();
ctx.beginPath();
const pts = locus.map(px);
ctx.moveTo(...pts[0]);
for (let i = 0; i < pts.length - 1; i++) {
  const a = pts[Math.max(0, i - 1)], b = pts[i], c = pts[i + 1], d = pts[Math.min(pts.length - 1, i + 2)];
  ctx.bezierCurveTo(b[0] + (c[0] - a[0]) / 6, b[1] + (c[1] - a[1]) / 6, c[0] - (d[0] - b[0]) / 6, c[1] - (d[1] - b[1]) / 6, c[0], c[1]);
}
ctx.closePath();
ctx.clip();
ctx.drawImage(paint(canvas.width, canvas.height, c => (c - 32) / 889, r => (659 - r) / 752), 0, 0);
ctx.restore();

ctx.fillStyle = '#323232';
ctx.fillRect(564 * SCALE, 24 * SCALE, 219 * SCALE, 238 * SCALE);
ctx.drawImage(paint(211 * SCALE, 227 * SCALE, c => 0.4193 + (c - 105) / 4500, r => 0.5053 - (r - 114) / 4800), 568 * SCALE, 30 * SCALE);
```
